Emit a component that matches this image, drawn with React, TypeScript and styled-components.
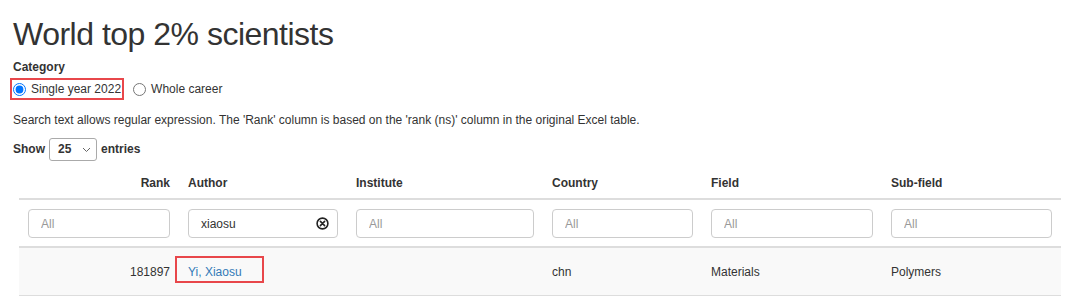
import React from "react";
import styled, { createGlobalStyle } from "styled-components";

const GlobalStyle = createGlobalStyle`
  html, body { margin: 0; padding: 0; background: #fff; }
  body {
    font-family: "Liberation Sans", Arial, Helvetica, sans-serif;
    font-size: 12px;
    line-height: 17px;
    color: #333;
  }
  * { box-sizing: border-box; }
`;

const Page = styled.div`
  padding: 14px 13px 0;
  width: 1080px;
`;

const Title = styled.h1`
  margin: 0;
  font-size: 32px;
  line-height: 40px;
  font-weight: 400;
  letter-spacing: -0.5px;
  color: #333;
`;

const SectionLabel = styled.div`
  margin-top: 5px;
  font-weight: 700;
`;

const RadioRow = styled.div`
  margin-top: 3px;
  height: 20px;
  display: flex;
  align-items: center;
  gap: 12px;
`;

const RadioItem = styled.label<{ $marked?: boolean }>`
  position: relative;
  display: flex;
  align-items: center;
  gap: 5px;
  height: 20px;
  cursor: pointer;
  &::after {
    content: "";
    display: ${(p) => (p.$marked ? "block" : "none")};
    position: absolute;
    top: -1px;
    bottom: -1px;
    left: -3px;
    right: -3px;
    border: 2px solid #e8474b;
    pointer-events: none;
  }
`;

const Radio = styled.input`
  margin: 0;
  width: 13px;
  height: 13px;
`;

const Note = styled.p`
  margin: 13px 0 0;
`;

const LengthRow = styled.div`
  margin-top: 9px;
  display: flex;
  align-items: center;
  gap: 4px;
  font-weight: 700;
  height: 23px;
`;

const SelectBox = styled.div`
  width: 48px;
  height: 23px;
  border: 1px solid #aaa;
  border-radius: 3px;
  display: flex;
  align-items: center;
  justify-content: space-between;
  padding: 0 5px 0 8px;
  font-weight: 700;
  background: #fff;
  svg { color: #666; }
`;

const Table = styled.table`
  margin: 4px 0 0 6px;
  width: 1042px;
  border-collapse: collapse;
  table-layout: fixed;
`;

const HeadCell = styled.th<{ $right?: boolean }>`
  padding: 10px 9px 6px;
  text-align: ${(p) => (p.$right ? "right" : "left")};
  font-weight: 700;
  border-bottom: 2px solid #ddd;
`;

const FilterCell = styled.td`
  padding: 9px 9px 8px;
  border-bottom: 2px solid #ddd;
`;

const FilterWrap = styled.div`
  position: relative;
`;

const FilterInput = styled.input`
  display: block;
  width: 100%;
  height: 29px;
  border: 1px solid #ccc;
  border-radius: 4px;
  padding: 0 12px;
  font-family: inherit;
  font-size: 12px;
  color: #333;
  outline: none;
  &::placeholder { color: #999; }
`;

const ClearButton = styled.span`
  position: absolute;
  right: 9px;
  top: 8px;
  width: 13px;
  height: 13px;
  display: flex;
`;

const BodyRow = styled.tr`
  background: #f9f9f9;
`;

const BodyCell = styled.td<{ $right?: boolean }>`
  padding: 16px 9px 14px;
  text-align: ${(p) => (p.$right ? "right" : "left")};
  border-bottom: 1px solid #ddd;
`;

const AuthorLink = styled.a`
  position: relative;
  color: #337ab7;
  text-decoration: none;
  &::after {
    content: "";
    position: absolute;
    top: -9px;
    bottom: -4px;
    left: -13px;
    right: -22px;
    border: 2px solid #e8474b;
    pointer-events: none;
  }
`;

const columns: { label: string; width: number; right?: boolean }[] = [
  { label: "Rank", width: 160, right: true },
  { label: "Author", width: 168 },
  { label: "Institute", width: 196 },
  { label: "Country", width: 159 },
  { label: "Field", width: 180 },
  { label: "Sub-field", width: 179 },
];

const ClearIcon = () => (
  <svg width="13" height="13" viewBox="0 0 13 13" fill="none">
    <circle cx="6.5" cy="6.5" r="5.4" stroke="#222" strokeWidth="1.6" />
    <path d="M4.4 4.4 L8.6 8.6 M8.6 4.4 L4.4 8.6" stroke="#222" strokeWidth="1.6" strokeLinecap="round" />
  </svg>
);

const Chevron = () => (
  <svg width="9" height="6" viewBox="0 0 9 6" fill="none">
    <path d="M1 1 L4.5 4.5 L8 1" stroke="currentColor" strokeWidth="1" />
  </svg>
);

export default function App() {
  return (
    <>
      <GlobalStyle />
      <Page>
        <Title>World top 2% scientists</Title>
        <SectionLabel>Category</SectionLabel>
        <RadioRow>
          <RadioItem $marked>
            <Radio type="radio" name="cat" defaultChecked />
            Single year 2022
          </RadioItem>
          <RadioItem>
            <Radio type="radio" name="cat" />
            Whole career
          </RadioItem>
        </RadioRow>
        <Note>
          Search text allows regular expression. The 'Rank' column is based on the 'rank (ns)' column in the original Excel table.
        </Note>
        <LengthRow>
          Show
          <SelectBox>
            25
            <Chevron />
          </SelectBox>
          entries
        </LengthRow>
        <Table>
          <colgroup>
            {columns.map((c) => (
              <col key={c.label} style={{ width: c.width }} />
            ))}
          </colgroup>
          <thead>
            <tr>
              {columns.map((c) => (
                <HeadCell key={c.label} $right={c.right}>
                  {c.label}
                </HeadCell>
              ))}
            </tr>
            <tr>
              {columns.map((c) => (
                <FilterCell key={c.label}>
                  <FilterWrap>
                    {c.label === "Author" ? (
                      <>
                        <FilterInput defaultValue="xiaosu" placeholder="All" />
                        <ClearButton>
                          <ClearIcon />
                        </ClearButton>
                      </>
                    ) : (
                      <FilterInput placeholder="All" />
                    )}
                  </FilterWrap>
                </FilterCell>
              ))}
            </tr>
          </thead>
          <tbody>
            <BodyRow>
              <BodyCell $right>181897</BodyCell>
              <BodyCell>
                <AuthorLink href="#">Yi, Xiaosu</AuthorLink>
              </BodyCell>
              <BodyCell></BodyCell>
              <BodyCell>chn</BodyCell>
              <BodyCell>Materials</BodyCell>
              <BodyCell>Polymers</BodyCell>
            </BodyRow>
          </tbody>
        </Table>
      </Page>
    </>
  );
}
